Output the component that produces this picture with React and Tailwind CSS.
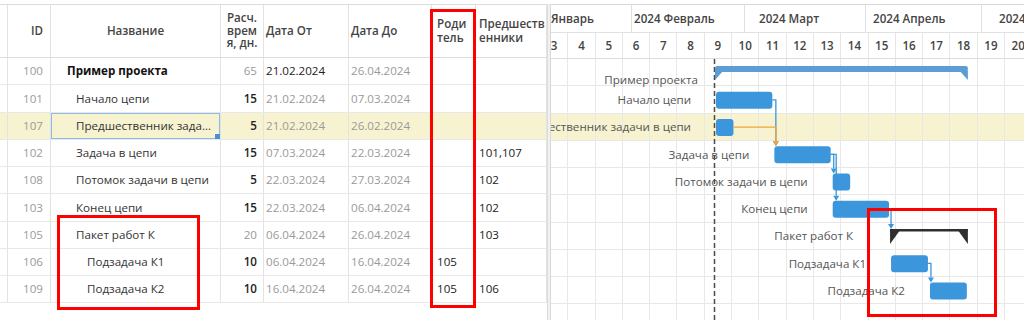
import React from "react";

const ROW_H = 27.25;
const PPD = 3.89; // px per day in the gantt
const START_X = 174; // chart x of 21.02.2024

const tasks = [
    { id: 100, name: "Пример проекта", dur: 65, from: "21.02.2024", to: "26.04.2024", level: 0, s: 0, e: 65, type: "project", durEdit: false, fromEdit: true },
    { id: 101, name: "Начало цепи", dur: 15, from: "21.02.2024", to: "07.03.2024", level: 1, s: 0, e: 15 },
    { id: 107, name: "Предшественник задачи в цепи", dur: 5, from: "21.02.2024", to: "26.02.2024", level: 1, s: 0, e: 5, selected: true },
    { id: 102, name: "Задача в цепи", dur: 15, from: "07.03.2024", to: "22.03.2024", pred: "101,107", level: 1, s: 15, e: 30 },
    { id: 108, name: "Потомок задачи в цепи", dur: 5, from: "22.03.2024", to: "27.03.2024", pred: "102", level: 1, s: 30, e: 35 },
    { id: 103, name: "Конец цепи", dur: 15, from: "22.03.2024", to: "06.04.2024", pred: "102", level: 1, s: 30, e: 45 },
    { id: 105, name: "Пакет работ К", dur: 20, from: "06.04.2024", to: "26.04.2024", pred: "103", level: 1, s: 45, e: 65, type: "group", durEdit: false },
    { id: 106, name: "Подзадача К1", dur: 10, from: "06.04.2024", to: "16.04.2024", parent: "105", level: 2, s: 45, e: 55 },
    { id: 109, name: "Подзадача К2", dur: 10, from: "16.04.2024", to: "26.04.2024", parent: "105", pred: "106", level: 2, s: 55, e: 65 },
];

const deps = [
    { from: 1, to: 3, off: 2.5, color: "#3b96dc" },
    { from: 3, to: 4, off: 2, color: "#3b96dc" },
    { from: 3, to: 5, off: 4.5, color: "#3b96dc" },
    { from: 5, to: 6, off: 1, color: "#3b96dc" },
    { from: 7, to: 8, off: 2, color: "#3b96dc" },
    // selected row dependency is drawn on top
    { from: 2, to: 3, off: 2.5, color: "#f0a53a" },
];

const months = [
    { label: "Январь", w: 91, pl: "pl-[10px]" },
    { label: "2024 Февраль", w: 113, pl: "pl-[2px]" },
    { label: "2024 Март", w: 121, pl: "pl-[14px]" },
    { label: "2024 Апрель", w: 116, pl: "pl-[7px]" },
    { label: "2024", w: 80, pl: "pl-[17px]" },
];

const weeks = Array.from({ length: 18 }, (_, i) => i + 3);

const x = (d) => START_X + d * PPD;
const rowTop = (i) => i * ROW_H;

const indent = ["pl-[16px]", "pl-[25px]", "pl-[36px]"];

function TableHeader() {
    const th = "h-full border-r border-[#e3e3e3] flex items-center";
    return (
        <div className="flex h-[54px] border-t border-b border-[#dcdcdc] text-[11.6px] font-semibold text-[#444] leading-[14px]">
            <div className={`${th} w-[8px]`}></div>
            <div className={`${th} w-[43px] justify-end pr-[7px]`}>ID</div>
            <div className={`${th} w-[170px] justify-center`}>Название</div>
            <div className={`${th} w-[43px] justify-center text-center leading-[12.5px]`}>
                Расч.<br />врем<br />я, дн.
            </div>
            <div className={`${th} w-[85px] pl-[2px]`}>Дата От</div>
            <div className={`${th} w-[83px] pl-[2px]`}>Дата До</div>
            <div className={`${th} w-[44px] pl-[5px]`}>
                Роди<br />тель
            </div>
            <div className={`${th} w-[71px] pl-[3px] overflow-hidden whitespace-nowrap`}>
                Предшеств<br />енники
            </div>
        </div>
    );
}

function TableRow({ t }) {
    const td = "h-full border-r border-[#e3e3e3] flex items-center";
    return (
        <div className={`flex h-[27.25px] border-b border-[#e8e8e8] text-[11.6px] ${t.selected ? "bg-[#f7f3d1]" : ""}`}>
            <div className={`${td} w-[8px]`}></div>
            <div className={`${td} w-[43px] justify-end pr-[7px] text-[#9a9a9a]`}>{t.id}</div>
            <div className={`${td} relative w-[170px] pr-[8px] ${indent[t.level]} ${t.level === 0 ? "font-bold text-[#111]" : "text-[#333]"}`}>
                <span className="truncate">{t.name}</span>
                {t.selected && (
                    <>
                        <div className="absolute inset-0 border border-[#8dbbe6]"></div>
                        <div className="absolute right-0 bottom-0 w-[5px] h-[5px] bg-[#4a90d9]"></div>
                    </>
                )}
            </div>
            <div className={`${td} w-[43px] justify-end pr-[6px] ${t.durEdit === false ? "text-[#9a9a9a]" : "text-[#222] font-semibold"}`}>
                {t.dur}
            </div>
            <div className={`${td} w-[85px] pl-[2px] ${t.fromEdit ? "text-[#222]" : "text-[#9a9a9a]"}`}>{t.from}</div>
            <div className={`${td} w-[83px] pl-[2px] text-[#9a9a9a]`}>{t.to}</div>
            <div className={`${td} w-[44px] pl-[5px] text-[#222]`}>{t.parent}</div>
            <div className={`${td} w-[71px] pl-[3px] text-[#222]`}>{t.pred}</div>
        </div>
    );
}

function GanttChart() {
    return (
        <svg className="absolute left-0 top-0 overflow-visible" width="500" height="262">
            <line x1="173.5" y1="0" x2="173.5" y2="262" stroke="#4a4a4a" strokeWidth="1.5" strokeDasharray="5 3" />
            {tasks.map((t, i) => {
                const x0 = x(t.s);
                const x1 = x(t.e);
                const top = rowTop(i);
                if (t.type === "project") {
                    return (
                        <g key={t.id} fill="#5c9dd6">
                            <rect x={x0} y={top + 7} width={x1 - x0} height={6} rx={2} />
                            <polygon points={`${x0},${top + 12} ${x0 + 8},${top + 12} ${x0},${top + 21}`} />
                            <polygon points={`${x1},${top + 12} ${x1 - 8},${top + 12} ${x1},${top + 21}`} />
                        </g>
                    );
                }
                if (t.type === "group") {
                    return (
                        <g key={t.id} fill="#2f2f2f">
                            <rect x={x0} y={top + 6.5} width={x1 - x0} height={2.5} />
                            <polygon points={`${x0},${top + 6.5} ${x0 + 9},${top + 6.5} ${x0 + 9},${top + 9} ${x0},${top + 21.5}`} />
                            <polygon points={`${x1},${top + 6.5} ${x1 - 9},${top + 6.5} ${x1 - 9},${top + 9} ${x1},${top + 21.5}`} />
                        </g>
                    );
                }
                return <rect key={t.id} x={x0 + 1} y={top + 5.5} width={x1 - x0 - 2} height={17} rx={3} fill="#3b96dc" />;
            })}
            {deps.map((d, k) => {
                const sx = x(tasks[d.from].e) - 1;
                const sy = rowTop(d.from) + ROW_H / 2;
                const vx = x(tasks[d.to].s) + d.off;
                const ty = rowTop(d.to) + (tasks[d.to].type === "group" ? 6.5 : 5.5);
                return (
                    <g key={k}>
                        <path d={`M${sx} ${sy} H${vx} V${ty - 5}`} fill="none" stroke={d.color} strokeWidth="1.3" />
                        <polygon points={`${vx - 3},${ty - 5} ${vx + 3},${ty - 5} ${vx},${ty}`} fill={d.color} />
                    </g>
                );
            })}
        </svg>
    );
}

function GanttLabels() {
    return tasks.map((t, i) => {
        const gap = t.type === "project" ? 17 : t.type === "group" ? 37 : 24;
        const dy = t.type === "project" ? 7 : 0;
        return (
            <div
                key={t.id}
                className="absolute flex items-center justify-end whitespace-nowrap text-[11.6px] text-[#555]"
                style={{ left: x(t.s) - gap - 400, width: 400, top: rowTop(i) + dy, height: ROW_H }}
            >
                {t.name}
            </div>
        );
    });
}

export default function App() {
    return (
        <div className="relative w-[1024px] h-[320px] overflow-hidden bg-white pt-[4px] font-['Open_Sans',sans-serif]">
            <div className="flex h-full">
                {/* Task table */}
                <div className="w-[547px] shrink-0">
                    <TableHeader />
                    {tasks.map((t) => (
                        <TableRow key={t.id} t={t} />
                    ))}
                </div>

                <div className="w-[3px] shrink-0 bg-[#f1f1f1] border-l border-[#dcdcdc]"></div>

                {/* Gantt */}
                <div className="flex-1 overflow-hidden border-l border-t border-[#d8d8d8]">
                    <div className="ml-[-10px] w-[500px]">
                        <div className="flex h-[28px] border-b border-[#e0e0e0] text-[11.6px] font-semibold text-[#444]">
                            {months.map((m) => (
                                <div
                                    key={m.label}
                                    className={`shrink-0 h-full flex items-center whitespace-nowrap border-r border-[#e0e0e0] ${m.pl}`}
                                    style={{ width: m.w }}
                                >
                                    {m.label}
                                </div>
                            ))}
                        </div>
                        <div className="flex h-[26px] border-b border-[#dcdcdc] text-[11.6px] font-semibold text-[#444]">
                            {weeks.map((w) => (
                                <div key={w} className="w-[27.3px] shrink-0 h-full flex items-center justify-center border-r border-[#e6e6e6]">
                                    {w}
                                </div>
                            ))}
                        </div>
                        <div className="relative h-[262px]">
                            {tasks.map((t) => (
                                <div key={t.id} className={`h-[27.25px] border-b border-[#e8e8e8] ${t.selected ? "bg-[#f7f3d1]" : ""}`}></div>
                            ))}
                            <div className="absolute inset-0 flex pointer-events-none">
                                {weeks.map((w) => (
                                    <div key={w} className="w-[27.3px] shrink-0 h-full border-r border-[#e8e8e8]"></div>
                                ))}
                            </div>
                            <GanttLabels />
                            <GanttChart />
                        </div>
                    </div>
                </div>
            </div>

            {/* annotation frames */}
            <div className="absolute left-[430px] top-[9px] w-[46px] h-[299px] border-[3px] border-[#ff0000]"></div>
            <div className="absolute left-[57px] top-[215px] w-[143px] h-[95px] border-[3px] border-[#ff0000]"></div>
            <div className="absolute left-[867px] top-[208px] w-[130px] h-[109px] border-[3px] border-[#ff0000]"></div>
        </div>
    );
}
